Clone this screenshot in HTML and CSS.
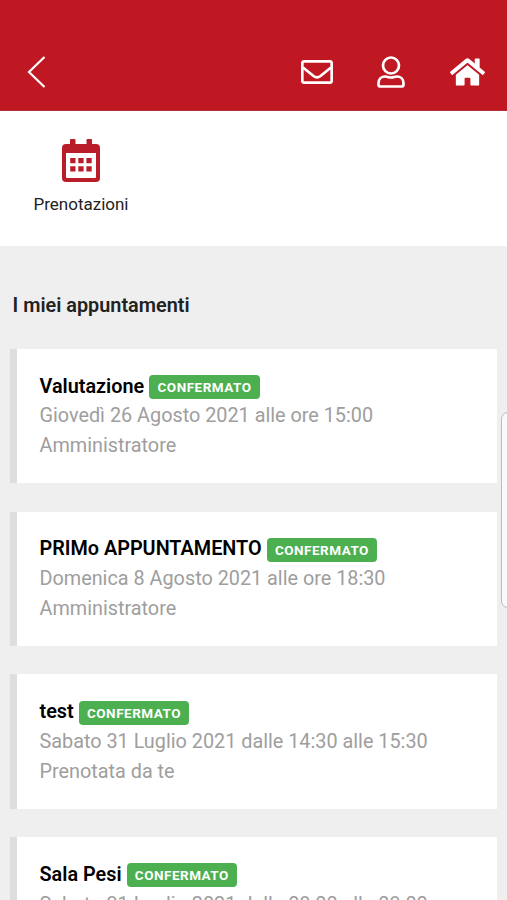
FILE: index.html
```html
<!DOCTYPE html>
<html lang="it">
<head>
<meta charset="utf-8">
<title>I miei appuntamenti</title>
<link rel="stylesheet" href="styles.css">
</head>
<body>
<header class="topbar">
  <svg class="back" viewBox="0 0 20 34"><path d="M17.500 2 2 17l15.500 15"/></svg>
  <nav class="actions">
    <svg class="mail" viewBox="0 0 32 24"><rect x="1.300" y="1.300" width="29.400" height="21.400" rx="2"/><path d="M2 7.500 12.500 16q3.500 2.600 7 0L30 7.500"/></svg>
    <svg class="user" viewBox="0 0 28 32"><circle cx="14" cy="9.500" r="8"/><path d="M8.200 20.500c2.200 0 3 1 5.800 1s3.600-1 5.800-1c4 0 6.700 3 6.700 6.700v1.300q0 2-2 2h-21q-2 0-2-2v-1.300c0-3.700 2.700-6.700 6.700-6.700z"/></svg>
    <svg class="home" viewBox="0 0 576 512"><path d="M280.370 148.260 96 300.110V464a16 16 0 0 0 16 16l112.060-.290a16 16 0 0 0 15.920-16V368a16 16 0 0 1 16-16h64a16 16 0 0 1 16 16v95.640a16 16 0 0 0 16 16.050L464 480a16 16 0 0 0 16-16V300L295.670 148.260a12.190 12.190 0 0 0-15.300 0zM571.600 251.470 488 182.560V44.050a12 12 0 0 0-12-12h-56a12 12 0 0 0-12 12v72.610L318.470 43a48 48 0 0 0-61 0L4.340 251.470a12 12 0 0 0-1.600 16.900l25.500 31A12 12 0 0 0 45.150 301l235.220-193.740a12.190 12.190 0 0 1 15.300 0L530.900 301a12 12 0 0 0 16.900-1.600l25.500-31a12 12 0 0 0-1.700-16.930z"/></svg>
  </nav>
</header>
<section class="menu">
  <div class="menu-item">
    <svg class="calendar" viewBox="0 0 38 44"><path fill-rule="evenodd" d="M4 5h4V1q0-1 1-1h3.500q1 0 1 1v4h11V1q0-1 1-1H29q1 0 1 1v4h4q4 0 4 4v30q0 4-4 4H4q-4 0-4-4V9q0-4 4-4zM4 14v24q0 1 1 1h28q1 0 1-1V14z"/><path d="M8.200 19h5.300v5.300H8.200zM16.300 19h5.300v5.300h-5.300zM24.400 19h5.300v5.300h-5.300zM8.200 27.200h5.300v5.300H8.200zM16.300 27.200h5.300v5.300h-5.300zM24.400 27.200h5.300v5.300h-5.300z"/></svg>
    <span class="menu-label">Prenotazioni</span>
  </div>
</section>
<main class="content">
  <h1 class="heading">I miei appuntamenti</h1>
  <article class="card">
    <div class="title"><b>Valutazione</b><span class="badge">CONFERMATO</span></div>
    <div>Giovedì 26 Agosto 2021 alle ore 15:00</div>
    <div>Amministratore</div>
  </article>
  <article class="card">
    <div class="title"><b>PRIMo APPUNTAMENTO</b><span class="badge">CONFERMATO</span></div>
    <div>Domenica 8 Agosto 2021 alle ore 18:30</div>
    <div>Amministratore</div>
  </article>
  <article class="card">
    <div class="title"><b>test</b><span class="badge">CONFERMATO</span></div>
    <div>Sabato 31 Luglio 2021 dalle 14:30 alle 15:30</div>
    <div>Prenotata da te</div>
  </article>
  <article class="card">
    <div class="title"><b>Sala Pesi</b><span class="badge">CONFERMATO</span></div>
    <div>Sabato 31 Luglio 2021 dalle 08:00 alle 09:00</div>
  </article>
</main>
<div class="edge-handle"></div>
</body>
</html>
```
FILE: styles.css
```css
* { box-sizing: border-box; }
body {
  margin: 0;
  height: 900px;
  overflow: hidden;
  position: relative;
  background: #efefef;
  font-family: Roboto, sans-serif;
}
svg { display: block; }
.topbar {
  height: 111px;
  padding: 33px 22px 0 27px;
  display: flex;
  align-items: center;
  justify-content: space-between;
  background: #c01823;
  border-bottom: 1px solid #b5303a;
}
.topbar svg { fill: none; stroke: #fff; stroke-width: 2.7; }
.topbar .back { width: 20px; height: 34px; stroke-width: 2.2; }
.actions { display: flex; align-items: center; }
.mail { width: 32px; height: 24px; margin-right: 44px; }
.user { width: 28px; height: 32px; margin-right: 45px; }
.topbar .home { width: 35px; height: 32px; fill: #fff; stroke: none; }
.menu { height: 135px; padding: 28px 0 0 33px; background: #fff; }
.menu-item { width: 96px; display: flex; flex-direction: column; align-items: center; }
.calendar { width: 38px; height: 44px; fill: #b91d2a; }
.menu-label { margin-top: 10px; font-size: 17px; line-height: 22px; color: #222; }
.content { height: 654px; overflow: hidden; padding: 45px 10px 0; }
.heading { margin: 0 0 28px 2.500px; font-size: 19.850px; line-height: 30px; font-weight: 600; color: #222; }
.card {
  height: 134.300px;
  margin-bottom: 28.400px;
  padding: 22.800px 0 0 22.500px;
  border-left: 7px solid #dedede;
  background: #fff;
  font-size: 19.820px;
  line-height: 29.700px;
  color: #9e9e9e;
  white-space: nowrap;
}
.title { height: 29.700px; display: flex; align-items: center; color: #000; }
.title b { font-weight: 600; }
.badge {
  height: 24px;
  margin: 1.500px 0 0 5.300px;
  padding: 0 8px;
  border-radius: 4px;
  background: #4caf50;
  color: #fff;
  font-size: 13.500px;
  font-weight: 700;
  letter-spacing: 0.500px;
  line-height: 24px;
}
.edge-handle {
  position: absolute;
  left: 501px;
  top: 412px;
  width: 20px;
  height: 196px;
  border: 1px solid #bbb;
  border-radius: 7px;
  background: #fafafa;
}
```
